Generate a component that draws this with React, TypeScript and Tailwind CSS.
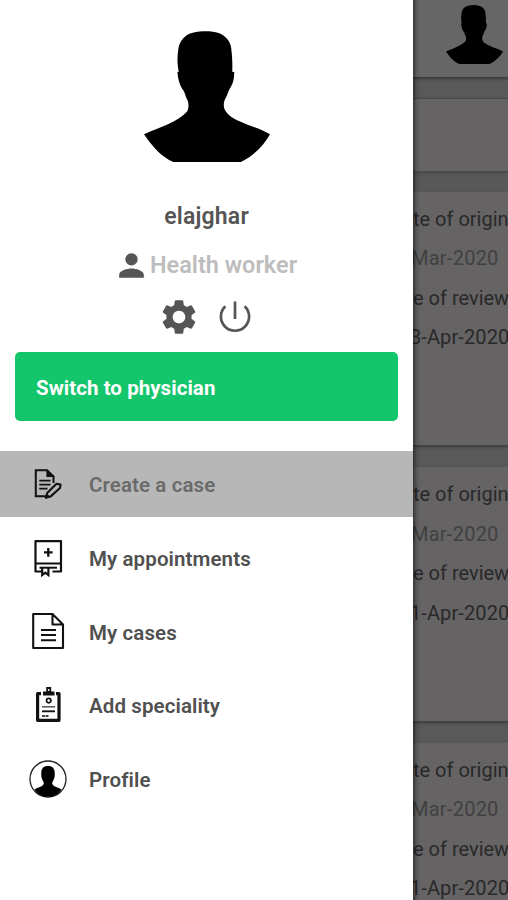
import { MdPerson, MdSettings } from "react-icons/md";

type IconProps = { className?: string };

type MenuItem = {
  label: string;
  icon: React.ReactNode;
  active?: boolean;
};

type CaseDates = {
  origin: string;
  review: string;
};

const Silhouette = ({ className }: IconProps) => (
  <svg viewBox="42 32 377 395" preserveAspectRatio="none" className={className}>
    <path d="M188 37C215 31 245 31 265 38C286 45 302 65 303 85C306 110 307 130 306 155L312 156C312 175 309 190 302 200C294 212 292 225 286 235C280 245 278 262 286 273C305 305 370 316 419 343C400 377 370 408 332 427L130 427C95 412 65 378 42 343C92 322 145 305 171 275C177 262 176 250 172 240C166 232 165 216 157 208C148 195 143 175 142 156L146 155C141 130 141 110 145 85C148 62 165 42 188 37Z" />
  </svg>
);

const PowerIcon = () => (
  <svg width="34" height="36" viewBox="0 0 34 36" fill="none" stroke="#555" strokeWidth="2.7">
    <path d="M7.4 7.3A14.1 14.1 0 1 0 26.6 7.3M17 2.5v17.5" />
  </svg>
);

const CreateIcon = () => (
  <svg width="36" height="36" viewBox="0 0 36 36" fill="none" stroke="#111" strokeWidth="2">
    <path d="M19 30.2H5.8V4.3H17L23.5 10.5V17" />
    <path d="M17 4.3V10.5H23.5Z" fill="#111" strokeWidth="1.2" />
    <path d="M9.3 14.7H20.5M9.3 18.7H20.5M9.3 22.7H17.5" strokeWidth="1.8" />
    <path d="M26.5 17.8L30.6 18.6L30 22L20.4 30.6L15.8 31.7L17.2 27Z" strokeWidth="2.1" strokeLinejoin="round" />
    <path d="M15 32.5L16.8 27.8L20.5 31Z" fill="#111" stroke="none" />
  </svg>
);

const AppointmentIcon = () => (
  <svg width="36" height="40" viewBox="0 0 36 40" fill="none" stroke="#111" strokeWidth="2.2">
    <path d="M12 33.5H5.5V3.2H31V33.5H22.5M5.5 25.5H31" strokeLinejoin="round" />
    <path d="M18.3 10V18.8M14 14.4H22.6" strokeWidth="2.3" />
    <path d="M9.5 29.7H27" strokeWidth="2" />
    <path d="M12.2 30V37L15.3 34.6L18.4 37V30" strokeWidth="2.2" />
  </svg>
);

const CasesIcon = () => (
  <svg width="36" height="40" viewBox="0 0 36 40" fill="none" stroke="#111" strokeWidth="2.1" strokeLinejoin="round">
    <path d="M3.2 3H22.5L33 13.5V37H3.2ZM22.5 3V13.5H33" />
    <path d="M11 19H26M11 24H26M11 29.3H26" />
  </svg>
);

const SpecialityIcon = () => (
  <svg width="36" height="40" viewBox="0 0 36 40" fill="none" stroke="#111">
    <path d="M11 8.7H7.6V35.3H29V8.7H26" strokeWidth="3.2" strokeLinejoin="round" />
    <path d="M13 6.5H16.2V2H21.2V6.5H24.5V10.6H13Z" fill="#111" stroke="none" />
    <circle cx="18.7" cy="5" r="0.9" fill="#fff" stroke="none" />
    <circle cx="18.7" cy="15.6" r="2.2" strokeWidth="1.7" />
    <path d="M12 21.8H25" stroke="#555" strokeWidth="1.5" />
    <path d="M12 26.3H25" strokeWidth="1.9" />
    <path d="M12 31H18.5" stroke="#444" strokeWidth="2" strokeDasharray="3 .6" />
  </svg>
);

const ProfileIcon = () => (
  <svg width="38" height="38" viewBox="0 0 38 38">
    <circle cx="19" cy="19" r="18" fill="#fff" stroke="#222" strokeWidth="1.3" />
    <path d="M19 6C24 6 26 9 25.7 14C26 18 24.4 20.5 23.2 22.5C23 27 29.5 27 32.5 29.5C26 39.3 12 39.3 5.5 29.5C8.5 27 15 27 14.8 22.5C13.6 20.5 12 18 12.3 14C12 9 14 6 19 6Z" />
  </svg>
);

const menu: MenuItem[] = [
  { label: "Create a case", icon: <CreateIcon />, active: true },
  { label: "My appointments", icon: <AppointmentIcon /> },
  { label: "My cases", icon: <CasesIcon /> },
  { label: "Add speciality", icon: <SpecialityIcon /> },
  { label: "Profile", icon: <ProfileIcon /> },
];

const cases: CaseDates[] = [
  { origin: "Mar-2020", review: "3-Apr-2020" },
  { origin: "Mar-2020", review: "1-Apr-2020" },
  { origin: "Mar-2020", review: "1-Apr-2020" },
];

const CaseCard = ({ item }: { item: CaseDates }) => (
  <div className="mb-[21px] h-[254.5px] shrink-0 whitespace-nowrap border-t border-[#575757] bg-[#656364] pt-[8.4px] text-[20px] leading-[39.5px] text-[#292929] shadow-[0_2px_3px_#3c3c3c]">
    <div>te of origin</div>
    <div className="-ml-[2px] tracking-[0.25px] text-[#414141]">{item.origin}</div>
    <div>e of review</div>
    <div className="-ml-[3px] tracking-[0.1px]">{item.review}</div>
  </div>
);

const App = () => {
  return (
    <div className="flex h-[900px] w-[508px] overflow-hidden bg-white font-['Roboto',sans-serif]">
      {/* DRAWER */}
      <aside className="flex w-[413px] shrink-0 flex-col bg-white">
        <div className="flex h-[352px] flex-col items-center pt-[31px]">
          <Silhouette className="h-[131px] w-[126px]" />
          <div className="mt-[39px] text-[23px] font-semibold leading-8 tracking-[0.2px] text-[#555]">elajghar</div>
          <div className="mt-[14px] flex h-9 items-center pr-[3px]">
            <MdPerson size={37} color="#555" />
            <span className="pt-px text-[23.5px] font-semibold text-[#bdbdbd]">Health worker</span>
          </div>
          <div className="mt-[13px] flex items-center gap-[18px] pr-[4px]">
            <MdSettings size={42} color="#555" />
            <PowerIcon />
          </div>
        </div>
        <button className="mx-[15px] flex h-[69px] shrink-0 items-center rounded-[5px] bg-[#13c56b] px-[21px] pt-[3px] text-[20.5px] font-bold tracking-[0.05px] text-white">
          Switch to physician
        </button>
        <nav className="mt-[30px]">
          {menu.map((item) => (
            <div
              key={item.label}
              className={
                item.active
                  ? "mb-1 flex h-[66px] items-center bg-[#b7b7b7] text-[#6b6b6b]"
                  : "flex h-[73.6px] items-center text-[#505050]"
              }
            >
              <div className="ml-[29px] flex w-[38px] justify-center">{item.icon}</div>
              <span className="ml-[22px] pt-[3px] text-[20.5px] font-semibold tracking-[0.1px]">{item.label}</span>
            </div>
          ))}
        </nav>
      </aside>

      {/* DIMMED PAGE */}
      <main className="flex w-[95px] flex-col overflow-hidden bg-[#585958]">
        <header className="flex h-[76.5px] shrink-0 justify-end bg-[#666] pr-[5px] pt-[5px] shadow-[0_2px_3px_#383838]">
          <Silhouette className="h-[59px] w-[57px]" />
        </header>
        <div className="mb-[20px] mt-[21px] h-[73px] shrink-0 border-t border-[#4a4a4a] bg-[#656364] shadow-[0_2px_4px_#464646]" />
        {cases.map((item, i) => (
          <CaseCard key={i} item={item} />
        ))}
      </main>
      {/* drawer edge shadow over the page */}
      <div className="relative -ml-[95px] w-[8px] shrink-0 bg-linear-to-r from-black/45 via-black/10 to-transparent" />
    </div>
  );
};

export default App;
